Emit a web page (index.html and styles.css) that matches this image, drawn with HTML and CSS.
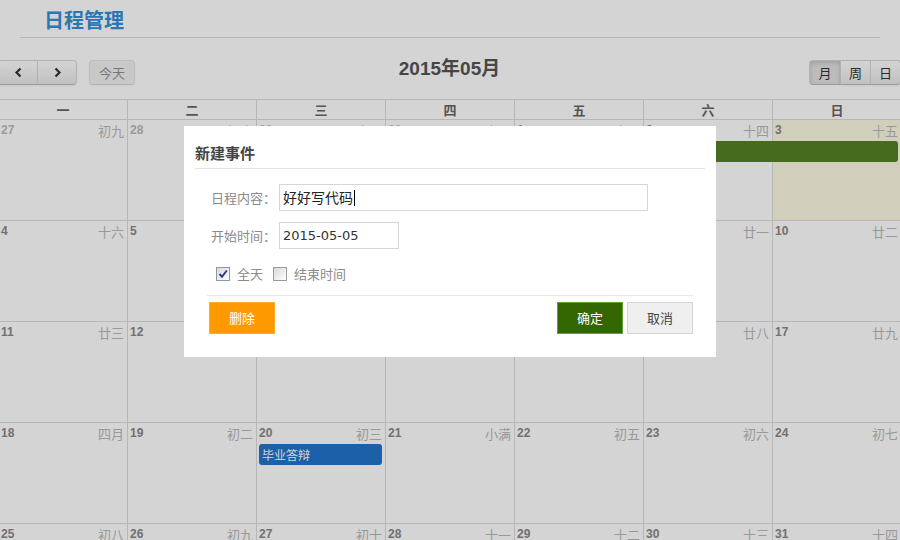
FILE: index.html
```html
<!DOCTYPE html>
<html lang="zh-CN">
<head>
<meta charset="utf-8">
<title>日程管理</title>
<link rel="stylesheet" href="styles.css">
</head>
<body>
<div class="page">
  <header class="page-header"><h1>日程管理</h1></header>

  <div class="calendar">
    <div class="toolbar">
      <div class="tb-left">
        <div class="btn-group">
          <span class="btn nav"><svg width="9" height="11" viewBox="0 0 9 11"><polyline points="6.5,1.5 2.5,5.5 6.5,9.5" fill="none" stroke="#333" stroke-width="2.2"/></svg></span>
          <span class="btn nav"><svg width="9" height="11" viewBox="0 0 9 11"><polyline points="2.5,1.5 6.5,5.5 2.5,9.5" fill="none" stroke="#333" stroke-width="2.2"/></svg></span>
        </div>
        <span class="btn today">今天</span>
      </div>
      <h2>2015年05月</h2>
      <div class="tb-right">
        <div class="btn-group">
          <span class="btn view active">月</span>
          <span class="btn view">周</span>
          <span class="btn view">日</span>
        </div>
      </div>
    </div>

    <div class="dow">
      <div>一</div><div>二</div><div>三</div><div>四</div><div>五</div><div>六</div><div>日</div>
    </div>

    <div class="week">
      <div class="day other"><span class="num">27</span><span class="lunar">初九</span></div>
      <div class="day other"><span class="num">28</span><span class="lunar">初十</span></div>
      <div class="day other"><span class="num">29</span><span class="lunar">十一</span></div>
      <div class="day other"><span class="num">30</span><span class="lunar">十二</span></div>
      <div class="day"><span class="num">1</span><span class="lunar">十三</span></div>
      <div class="day"><span class="num">2</span><span class="lunar">十四</span></div>
      <div class="day today-cell"><span class="num">3</span><span class="lunar">十五</span></div>
      <div class="event green" style="grid-column: 5 / 8;"></div>
    </div>

    <div class="week">
      <div class="day"><span class="num">4</span><span class="lunar">十六</span></div>
      <div class="day"><span class="num">5</span><span class="lunar">十七</span></div>
      <div class="day"><span class="num">6</span><span class="lunar">立夏</span></div>
      <div class="day"><span class="num">7</span><span class="lunar">十九</span></div>
      <div class="day"><span class="num">8</span><span class="lunar">二十</span></div>
      <div class="day"><span class="num">9</span><span class="lunar">廿一</span></div>
      <div class="day"><span class="num">10</span><span class="lunar">廿二</span></div>
    </div>

    <div class="week">
      <div class="day"><span class="num">11</span><span class="lunar">廿三</span></div>
      <div class="day"><span class="num">12</span><span class="lunar">廿四</span></div>
      <div class="day"><span class="num">13</span><span class="lunar">廿五</span></div>
      <div class="day"><span class="num">14</span><span class="lunar">廿六</span></div>
      <div class="day"><span class="num">15</span><span class="lunar">廿七</span></div>
      <div class="day"><span class="num">16</span><span class="lunar">廿八</span></div>
      <div class="day"><span class="num">17</span><span class="lunar">廿九</span></div>
    </div>

    <div class="week">
      <div class="day"><span class="num">18</span><span class="lunar">四月</span></div>
      <div class="day"><span class="num">19</span><span class="lunar">初二</span></div>
      <div class="day"><span class="num">20</span><span class="lunar">初三</span></div>
      <div class="day"><span class="num">21</span><span class="lunar">小满</span></div>
      <div class="day"><span class="num">22</span><span class="lunar">初五</span></div>
      <div class="day"><span class="num">23</span><span class="lunar">初六</span></div>
      <div class="day"><span class="num">24</span><span class="lunar">初七</span></div>
      <div class="event blue" style="grid-column: 3 / 4;">毕业答辩</div>
    </div>

    <div class="week">
      <div class="day"><span class="num">25</span><span class="lunar">初八</span></div>
      <div class="day"><span class="num">26</span><span class="lunar">初九</span></div>
      <div class="day"><span class="num">27</span><span class="lunar">初十</span></div>
      <div class="day"><span class="num">28</span><span class="lunar">十一</span></div>
      <div class="day"><span class="num">29</span><span class="lunar">十二</span></div>
      <div class="day"><span class="num">30</span><span class="lunar">十三</span></div>
      <div class="day"><span class="num">31</span><span class="lunar">十四</span></div>
    </div>
  </div>
</div>

<div class="overlay">
  <div class="modal">
    <div class="modal-header">新建事件</div>
    <div class="modal-body">
      <div class="form-row">
        <span class="field">日程内容：</span>
        <div class="input wide">好好写代码<span class="caret"></span></div>
      </div>
      <div class="form-row">
        <span class="field">开始时间：</span>
        <div class="input date">2015-05-05</div>
      </div>
      <div class="checks">
        <span class="cb checked"><svg width="12" height="12" viewBox="0 0 12 12"><polyline points="2.5,6 5,8.8 9.8,2.5" fill="none" stroke="#2b3d8a" stroke-width="2"/></svg></span>
        <span class="cb-label">全天</span>
        <span class="cb second"></span>
        <span class="cb-label">结束时间</span>
      </div>
      <div class="footer">
        <span class="mbtn del">删除</span>
        <span class="mbtn ok">确定</span>
        <span class="mbtn cancel">取消</span>
      </div>
    </div>
  </div>
</div>
</body>
</html>
```

FILE: styles.css
```css
html, body {
  margin: 0;
  padding: 0;
  overflow: hidden;
  background: #fff;
}

body {
  font-family: "Liberation Sans", "Noto Sans CJK SC", sans-serif;
  color: #333;
}

.page-header {
  margin: 0 20px;
  padding: 6px 0 3px 24px;
  border-bottom: 1px solid #ddd;
}

.page-header h1 {
  margin: 0;
  font: bold 20px/28px "Noto Sans CJK SC", sans-serif;
  color: #3390d8;
}

.calendar {
  margin: 22px 0 0 -2px;
  width: 903px;
}

.toolbar {
  display: grid;
  grid-template-columns: 1fr auto 1fr;
  height: 25px;
  margin-bottom: 14px;
}

.tb-left {
  display: flex;
  align-items: center;
}

.tb-right {
  display: flex;
  justify-content: flex-end;
}

.toolbar h2 {
  margin: 0;
  align-self: start;
  font: bold 19px/17px "Liberation Sans", "Noto Sans CJK SC", sans-serif;
  color: #555;
}

.btn-group {
  display: flex;
}

.btn {
  display: flex;
  align-items: center;
  justify-content: center;
  box-sizing: border-box;
  height: 25px;
  padding: 0 8px;
  border: 1px solid #d6d6d6;
  border-bottom-color: #bcbcbc;
  background: linear-gradient(#ffffff, #e8e8e8);
  box-shadow: inset 0 1px 0 rgba(255, 255, 255, 0.3), 0 1px 2px rgba(0, 0, 0, 0.05);
  border-radius: 4px;
  font: 13px/23px "Noto Sans CJK SC", sans-serif;
  color: #333;
}

.btn-group .btn {
  border-radius: 0;
}

.btn-group .btn:first-child {
  border-radius: 4px 0 0 4px;
}

.btn-group .btn:last-child {
  border-radius: 0 4px 4px 0;
}

.btn-group .btn + .btn {
  margin-left: -1px;
}

.btn.nav {
  width: 40px;
  padding: 0;
}

.btn.today {
  margin-left: 12px;
  padding: 0 9px;
  opacity: 0.65;
  background: #eaeaea;
  color: #555;
}

.btn.view {
  width: 32px;
  padding: 0;
}

.btn.view + .btn.view {
  width: 31px;
}

.btn.active {
  background: #e2e2e2;
  box-shadow: inset 0 2px 4px rgba(0, 0, 0, 0.15);
}

.dow {
  display: grid;
  grid-template-columns: repeat(7, minmax(0, 1fr));
  border-top: 1px solid #ddd;
  border-bottom: 1px solid #ddd;
}

.dow div {
  border-left: 1px solid #ddd;
  text-align: center;
  font: bold 13px/19px "Noto Sans CJK SC", sans-serif;
  color: #666;
}

.week {
  display: grid;
  grid-template-columns: repeat(7, minmax(0, 1fr));
  grid-template-rows: 21px 21px 1fr;
  height: 101px;
}

.day {
  grid-row: 1 / -1;
  display: flex;
  justify-content: space-between;
  align-items: flex-start;
  box-sizing: border-box;
  padding: 2px 3px 0 2px;
  border-left: 1px solid #ddd;
  border-bottom: 1px solid #ddd;
}

.day:nth-child(1) { grid-column: 1; }
.day:nth-child(2) { grid-column: 2; }
.day:nth-child(3) { grid-column: 3; }
.day:nth-child(4) { grid-column: 4; }
.day:nth-child(5) { grid-column: 5; }
.day:nth-child(6) { grid-column: 6; }
.day:nth-child(7) { grid-column: 7; }

.today-cell {
  background: #fcf8e3;
}

.num {
  font: bold 12px/17px "Liberation Sans", sans-serif;
  color: #888;
}

.other .num {
  color: #bbb;
}

.lunar {
  font: 13px/17px "Noto Sans CJK SC", sans-serif;
  color: #b8b8b8;
}

.event {
  grid-row: 2;
  margin: 0 3px;
  border-radius: 3px;
  padding-left: 3px;
  font: 12px/21px "Noto Sans CJK SC", sans-serif;
  color: #fff;
}

.event.green {
  background: #558025;
}

.event.blue {
  background: #2274cb;
}

.overlay {
  position: fixed;
  inset: 0;
  background: rgba(0, 0, 0, 0.17);
  display: flex;
  justify-content: center;
  align-items: flex-start;
  padding-top: 126px;
}

.modal {
  width: 532px;
  background: #fff;
}

.modal-header {
  margin: 0 11px;
  padding: 17px 0 5px;
  border-bottom: 1px solid #e3e3e3;
  font: bold 15px/20px "Noto Sans CJK SC", sans-serif;
  color: #444;
}

.modal-body {
  padding: 15px 23px 23px;
}

.form-row {
  display: flex;
  align-items: center;
  margin-left: 4px;
}

.form-row + .form-row {
  margin-top: 11px;
}

.field {
  width: 68px;
  font: 13px/27px "Noto Sans CJK SC", sans-serif;
  color: #8a8a8a;
}

.input {
  display: flex;
  align-items: center;
  box-sizing: border-box;
  height: 27px;
  padding: 0 3px;
  border: 1px solid #d6d6d6;
  font: 14px/25px "Noto Sans CJK SC", sans-serif;
  color: #222;
}

.input.wide {
  width: 369px;
}

.input.date {
  width: 120px;
  font: 13px/25px "DejaVu Sans", sans-serif;
  color: #333;
}

.caret {
  display: inline-block;
  width: 1px;
  height: 16px;
  margin-left: 1px;
  background: #000;
}

.checks {
  display: flex;
  align-items: center;
  height: 20px;
  margin-top: 15px;
  padding-left: 9px;
  font: 13px/20px "Noto Sans CJK SC", sans-serif;
  color: #8a8a8a;
}

.cb {
  display: flex;
  align-items: center;
  justify-content: center;
  box-sizing: border-box;
  width: 14px;
  height: 14px;
  margin-right: 7px;
  border: 1px solid #8e97a3;
  background: linear-gradient(135deg, #d8d8dc, #ffffff);
}

.cb.second {
  margin-left: 10px;
  border-color: #9a9a9a;
}

.footer {
  display: flex;
  margin-top: 11px;
  padding-top: 6px;
  border-top: 1px solid #e8e8e8;
}

.mbtn {
  box-sizing: border-box;
  width: 66px;
  height: 32px;
  border: 1px solid;
  text-align: center;
  font: 13px/30px "Noto Sans CJK SC", sans-serif;
}

.mbtn.del {
  margin-left: 2px;
  background: #ff9900;
  border-color: #ffab33;
  color: #fff;
}

.mbtn.ok {
  margin-left: auto;
  background: #336600;
  border-color: #5ea52d;
  color: #fff;
}

.mbtn.cancel {
  margin-left: 4px;
  background: #efefef;
  border-color: #d4d4d4;
  color: #444;
}
```
